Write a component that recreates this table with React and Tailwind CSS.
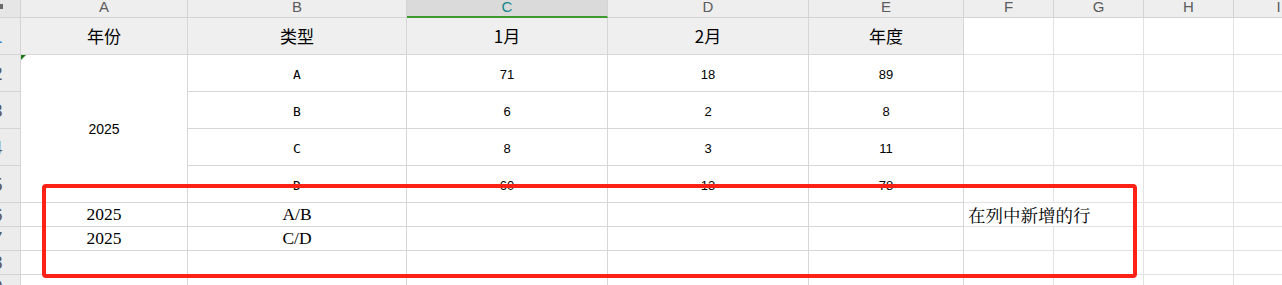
import React from "react";

const LINE = "border-[#d6d6d6]";
const LINE2 = "border-[#e2e2e2]";

function ColHead({ children, selected }) {
  return (
    <div
      className={
        "flex items-start justify-center border-r border-b border-[#d4d4d4] text-[15px] leading-[13px] overflow-hidden " +
        (selected
          ? "bg-[#dadada] text-[#12868a] border-b-2 border-b-[#3d9a2e]"
          : "bg-[#eeeeee] text-[#5c5c5c]")
      }
      style={{ fontFamily: '"Liberation Sans", Arial, sans-serif' }}
    >
      {children}
    </div>
  );
}

function RowHead({ n, blue }) {
  return (
    <div
      className={
        "flex items-center overflow-hidden bg-[#ececec] border-r border-b border-[#d4d4d4] text-[19px] " +
        (blue ? "text-[#3c86d4]" : "text-[#5a5a5a]")
      }
      style={{ fontFamily: '"Liberation Sans", Arial, sans-serif' }}
    >
      <span className="-ml-[8px] leading-none">{n}</span>
    </div>
  );
}

function Head({ children }) {
  return (
    <div
      className={"flex items-center justify-center bg-[#efefef] border-r border-b text-[17px] text-black " + LINE}
      style={{ fontFamily: '"Noto Sans CJK SC", "Noto Sans", sans-serif' }}
    >
      {children}
    </div>
  );
}

function Mono({ children }) {
  return (
    <div
      className={"flex items-center justify-center border-r border-b pt-[4px] text-[13px] text-black " + LINE}
      style={{ fontFamily: '"DejaVu Sans Mono", monospace' }}
    >
      {children}
    </div>
  );
}

function Num({ children }) {
  return (
    <div
      className={"flex items-center justify-center border-r border-b pt-[4px] text-[13px] text-black " + LINE}
      style={{ fontFamily: '"Liberation Sans", Arial, sans-serif' }}
    >
      {children}
    </div>
  );
}

function Empty({ noRight }) {
  return <div className={(noRight ? "" : "border-r ") + "border-b " + LINE2} />;
}

function Serif({ children }) {
  return (
    <div
      className={"flex items-center justify-center border-r border-b text-[17.5px] leading-none text-black " + LINE}
      style={{ fontFamily: '"Liberation Serif", "Noto Serif CJK SC", "Noto Sans CJK SC", serif' }}
    >
      {children}
    </div>
  );
}

function Blank() {
  return <div className={"border-r border-b " + LINE} />;
}

export default function App() {
  return (
    <div className="relative w-[1282px] h-[285px] overflow-hidden bg-white">
      <div className="grid grid-cols-[21px_167px_219px_201px_201px_155px_90px_90px_90px_90px] grid-rows-[18px_37px_37px_37px_37px_37px_24px_24px_24px_24px]">
        {/* column header */}
        <div className="bg-[#e6e6e6] border-r border-b border-[#d4d4d4] overflow-hidden">
          <div className="mt-[4px] w-[3px] h-[5px] bg-[#6a6a6a]" />
        </div>
        <ColHead>A</ColHead>
        <ColHead>B</ColHead>
        <ColHead selected>C</ColHead>
        <ColHead>D</ColHead>
        <ColHead>E</ColHead>
        <ColHead>F</ColHead>
        <ColHead>G</ColHead>
        <ColHead>H</ColHead>
        <ColHead>I</ColHead>

        {/* row 1 */}
        <RowHead n="1" blue />
        <Head>年份</Head>
        <Head>类型</Head>
        <Head>1月</Head>
        <Head>2月</Head>
        <Head>年度</Head>
        <Empty />
        <Empty />
        <Empty />
        <Empty />

        {/* row 2 */}
        <RowHead n="2" />
        <div
          className={"row-span-4 flex items-center justify-center border-r border-b text-[14px] text-black relative " + LINE}
          style={{ fontFamily: '"Liberation Sans", Arial, sans-serif' }}
        >
          <div className="absolute left-0 top-0 w-0 h-0 border-t-[5px] border-r-[5px] border-t-[#1f7a1f] border-r-transparent" />
          <span className="mt-[2px]">2025</span>
        </div>
        <Mono>A</Mono>
        <Num>71</Num>
        <Num>18</Num>
        <Num>89</Num>
        <Empty />
        <Empty />
        <Empty />
        <Empty />

        {/* row 3 */}
        <RowHead n="3" />
        <Mono>B</Mono>
        <Num>6</Num>
        <Num>2</Num>
        <Num>8</Num>
        <Empty />
        <Empty />
        <Empty />
        <Empty />

        {/* row 4 */}
        <RowHead n="4" />
        <Mono>C</Mono>
        <Num>8</Num>
        <Num>3</Num>
        <Num>11</Num>
        <Empty />
        <Empty />
        <Empty />
        <Empty />

        {/* row 5 */}
        <RowHead n="5" />
        <Mono>D</Mono>
        <Num>60</Num>
        <Num>13</Num>
        <Num>78</Num>
        <Empty />
        <Empty />
        <Empty />
        <Empty />

        {/* row 6 */}
        <RowHead n="6" />
        <Serif>2025</Serif>
        <Serif>A/B</Serif>
        <Blank />
        <Blank />
        <Blank />
        <div
          className={"flex items-center border-b whitespace-nowrap pl-[4px] text-[17.5px] leading-none text-black " + LINE2}
          style={{ fontFamily: '"Noto Serif CJK SC", "Liberation Serif", "Noto Sans CJK SC", serif' }}
        >
          在列中新增的行
        </div>
        <Empty />
        <Empty />
        <Empty />

        {/* row 7 */}
        <RowHead n="7" />
        <Serif>2025</Serif>
        <Serif>C/D</Serif>
        <Blank />
        <Blank />
        <Blank />
        <Empty />
        <Empty />
        <Empty />
        <Empty />

        {/* row 8 */}
        <RowHead n="8" />
        <Blank />
        <Blank />
        <Blank />
        <Blank />
        <Blank />
        <Empty />
        <Empty />
        <Empty />
        <Empty />

        {/* row 9 */}
        <RowHead n="9" />
        <Blank />
        <Blank />
        <Blank />
        <Blank />
        <Blank />
        <Empty />
        <Empty />
        <Empty />
        <Empty />
      </div>

      {/* red annotation box */}
      <div className="absolute left-[42px] top-[184px] w-[1095px] h-[94px] border-4 border-[#fe2116] rounded-[4px] pointer-events-none" />
    </div>
  );
}
